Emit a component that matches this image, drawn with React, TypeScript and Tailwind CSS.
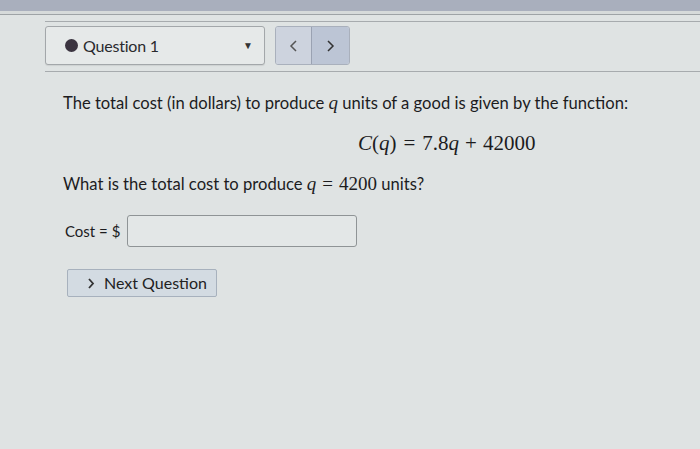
import React from 'react';

const serif = { fontFamily: '"Liberation Serif", serif' };

export default function App() {
  return (
    <div
      className="w-[700px] h-[449px] overflow-hidden bg-[#dfe3e3] text-[#1c1c1e]"
      style={{ fontFamily: 'Lato, "Liberation Sans", sans-serif' }}
    >
      {/* top band */}
      <div className="h-[11px] bg-[#a9afbd]" />
      <div className="h-[3px] bg-[#d6dada]" />
      <div className="h-px bg-[#9ea3a6]" />
      <div className="pl-[45px]">
        <div className="mt-[6px] h-px bg-[#a7abae]" />
        {/* question nav */}
        <div className="flex items-center gap-[10px] mt-[4px]">
          <div className="w-[220px] h-[39px] rounded-[3px] border border-[#a3a7aa] bg-[#e6e9e9] flex items-center pl-[19px] pr-[11px] shadow-[0_1px_1px_rgba(0,0,0,0.08)]">
            <span className="w-[13px] h-[13px] rounded-full bg-[#3b3440]" />
            <span className="ml-[5px] text-[16px] tracking-[-0.2px] text-[#2a2a2e]">Question 1</span>
            <span className="ml-auto text-[10px] text-[#333]">▼</span>
          </div>
          <div className="flex h-[39px] rounded-[3px] border border-[#a9b0bc] overflow-hidden">
            <button className="w-[36px] h-full bg-[#cdd3de] flex items-center justify-center border-r border-[#9aa2b2]">
              <svg width="9" height="12" viewBox="0 0 9 12" fill="none" stroke="#555" strokeWidth="1.5">
                <path d="M7 1 L2 6 L7 11" />
              </svg>
            </button>
            <button className="w-[37px] h-full bg-[#bcc5d5] flex items-center justify-center">
              <svg width="9" height="12" viewBox="0 0 9 12" fill="none" stroke="#333" strokeWidth="1.5">
                <path d="M2 1 L7 6 L2 11" />
              </svg>
            </button>
          </div>
        </div>
        <div className="mt-[6px] h-px bg-[#a7abae]" />
      </div>

      {/* question body */}
      <div className="pl-[63px] pt-[21px] text-[16.6px] leading-[20px]">
        <p>
          The total cost (in dollars) to produce{' '}
          <span className="italic text-[19px]" style={serif}>q</span>{' '}
          units of a good is given by the function:
        </p>
        <p className="mt-[18px] ml-[295px] text-[21px] leading-[24px]" style={serif}>
          <span className="italic">C</span>(<span className="italic">q</span>)
          <span className="mx-[7px]">=</span>7.8<span className="italic">q</span>
          <span className="mx-[6px]">+</span>42000
        </p>
        <p className="mt-[19px]">
          What is the total cost to produce{' '}
          <span className="italic text-[19px]" style={serif}>q</span>
          <span className="text-[19px] mx-[6px]" style={serif}>=</span>
          <span className="text-[19px]" style={serif}>4200</span> units?
        </p>
        <div className="flex items-center mt-[21px]">
          <span className="ml-[2px] text-[15px]">Cost = $</span>
          <div className="ml-[7px] w-[230px] h-[32px] rounded-[3px] border border-[#8f9496] bg-[#e3e7e7]" />
        </div>
        <button className="mt-[22px] ml-[4px] w-[150px] h-[28px] rounded-[2px] border border-[#a7b1bd] bg-[#d3dbe2] flex items-center pl-[19px] text-[16px] text-[#222]">
          <svg width="8" height="11" viewBox="0 0 8 11" fill="none" stroke="#333" strokeWidth="1.8" className="mr-[9px]">
            <path d="M2 1 L6 5.5 L2 10" />
          </svg>
          Next Question
        </button>
      </div>
    </div>
  );
}
